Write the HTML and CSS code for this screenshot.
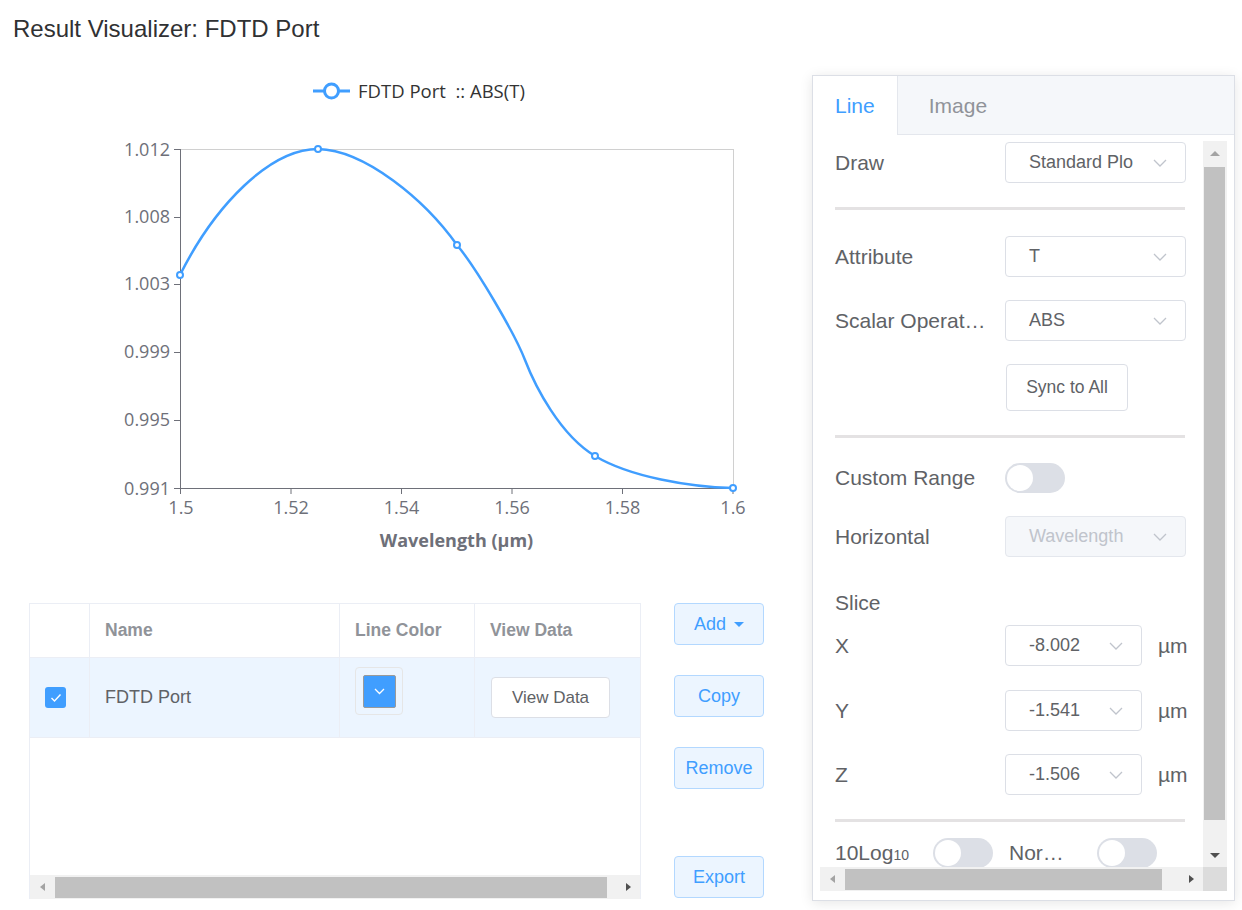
FILE: index.html
```html
<!DOCTYPE html>
<html>
<head>
<meta charset="utf-8">
<title>Result Visualizer: FDTD Port</title>
<link rel="stylesheet" href="styles.css">
</head>
<body>
<div class="page">
  <h1 class="title">Result Visualizer: FDTD Port</h1>
  <div class="main">
    <section class="left">
      <svg class="chart" width="800" height="560" viewBox="0 43 800 560">
        <line class="legend-line" x1="313" y1="91" x2="350" y2="91"/>
        <circle class="legend-marker" cx="331.5" cy="91" r="7"/>
        <text class="legend-text" x="358" y="97.5">FDTD Port  :: ABS(T)</text>

        <line class="grid-line" x1="180" y1="149.5" x2="733.5" y2="149.5"/>
        <line class="grid-line" x1="733.5" y1="149" x2="733.5" y2="488"/>

        <line class="axis" x1="180.5" y1="149" x2="180.5" y2="489"/>
        <line class="axis" x1="180" y1="488.5" x2="734" y2="488.5"/>
        <g class="axis">
          <line x1="174" y1="149.5" x2="180" y2="149.5"/>
          <line x1="174" y1="217.5" x2="180" y2="217.5"/>
          <line x1="174" y1="284.5" x2="180" y2="284.5"/>
          <line x1="174" y1="352.5" x2="180" y2="352.5"/>
          <line x1="174" y1="420.5" x2="180" y2="420.5"/>
          <line x1="174" y1="488.5" x2="180" y2="488.5"/>
          <line x1="180.5" y1="488" x2="180.5" y2="494"/>
          <line x1="291" y1="488" x2="291" y2="494"/>
          <line x1="401.5" y1="488" x2="401.5" y2="494"/>
          <line x1="512" y1="488" x2="512" y2="494"/>
          <line x1="622.5" y1="488" x2="622.5" y2="494"/>
          <line x1="733" y1="488" x2="733" y2="494"/>
        </g>
        <g class="tick-label y-labels">
          <text x="170" y="155.5">1.012</text>
          <text x="170" y="223">1.008</text>
          <text x="170" y="290">1.003</text>
          <text x="170" y="358">0.999</text>
          <text x="170" y="426">0.995</text>
          <text x="170" y="494.5">0.991</text>
        </g>
        <g class="tick-label x-labels">
          <text x="181" y="514">1.5</text>
          <text x="291" y="514">1.52</text>
          <text x="401.5" y="514">1.54</text>
          <text x="512" y="514">1.56</text>
          <text x="622.5" y="514">1.58</text>
          <text x="733" y="514">1.6</text>
        </g>
        <text class="axis-name" x="456.5" y="547">Wavelength (µm)</text>

        <path class="series" d="M180,275 C215,205 270,149 318,149 C365,150 425,200 457,245 C477,269 515,334 525,360 C535,386 560,435 595,456 C630,477 690,487 733,488"/>
        <g class="marker">
          <circle cx="180" cy="275" r="3"/>
          <circle cx="318" cy="149" r="3"/>
          <circle cx="457" cy="245" r="3"/>
          <circle cx="595" cy="456" r="3"/>
          <circle cx="733" cy="488" r="3"/>
        </g>
      </svg>

      <div class="data">
        <div class="table">
          <div class="tr thead">
            <div class="td"></div>
            <div class="td">Name</div>
            <div class="td">Line Color</div>
            <div class="td">View Data</div>
          </div>
          <div class="tr trow">
            <div class="td">
              <span class="checkbox">
                <svg width="12" height="10" viewBox="0 0 12 10"><polyline points="1.5,5 4.5,8 10.5,1.5"/></svg>
              </span>
            </div>
            <div class="td">FDTD Port</div>
            <div class="td">
              <span class="picker">
                <span class="swatch">
                  <svg width="11" height="7" viewBox="0 0 11 7"><polyline points="1,1 5.5,5.5 10,1"/></svg>
                </span>
              </span>
            </div>
            <div class="td">
              <button class="btn-plain">View Data</button>
            </div>
          </div>
          <div class="tfill"></div>
          <div class="hscroll table-h">
            <span class="sb-btn"><span class="tri tri-left"></span></span>
            <span class="hthumb table-thumb"></span>
            <span class="sb-space"></span>
            <span class="sb-btn"><span class="tri tri-right"></span></span>
          </div>
        </div>
        <div class="actions">
          <button class="btn-light">Add<span class="caret"></span></button>
          <button class="btn-light">Copy</button>
          <button class="btn-light">Remove</button>
          <button class="btn-light btn-export">Export</button>
        </div>
      </div>
    </section>

    <aside class="panel">
      <div class="tabs">
        <div class="tab active">Line</div>
        <div class="tab inactive">Image</div>
      </div>
      <div class="panel-body">
        <div class="scroller">
          <div class="viewport">
            <div class="form">
              <div class="row">
                <span class="label">Draw</span>
                <div class="select w-wide"><span class="val">Standard Plo</span><svg class="chev" viewBox="0 0 14 8"><polyline points="1,1 7,7 13,1"/></svg></div>
              </div>
              <div class="divider mt-24"></div>
              <div class="row mt-26">
                <span class="label">Attribute</span>
                <div class="select w-wide"><span class="val">T</span><svg class="chev" viewBox="0 0 14 8"><polyline points="1,1 7,7 13,1"/></svg></div>
              </div>
              <div class="row mt-23">
                <span class="label">Scalar Operat…</span>
                <div class="select w-wide"><span class="val">ABS</span><svg class="chev" viewBox="0 0 14 8"><polyline points="1,1 7,7 13,1"/></svg></div>
              </div>
              <div class="row mt-23">
                <button class="btn-sync">Sync to All</button>
              </div>
              <div class="divider mt-24"></div>
              <div class="row mt-25">
                <span class="label">Custom Range</span>
                <span class="switch"></span>
              </div>
              <div class="row mt-23">
                <span class="label">Horizontal</span>
                <div class="select w-wide disabled"><span class="val">Wavelength</span><svg class="chev" viewBox="0 0 14 8"><polyline points="1,1 7,7 13,1"/></svg></div>
              </div>
              <div class="row slice-row">
                <span class="label">Slice</span>
              </div>
              <div class="row mt-7">
                <span class="label">X</span>
                <div class="select w-narrow"><span class="val">-8.002</span><svg class="chev" viewBox="0 0 14 8"><polyline points="1,1 7,7 13,1"/></svg></div>
                <span class="unit">µm</span>
              </div>
              <div class="row mt-24">
                <span class="label">Y</span>
                <div class="select w-narrow"><span class="val">-1.541</span><svg class="chev" viewBox="0 0 14 8"><polyline points="1,1 7,7 13,1"/></svg></div>
                <span class="unit">µm</span>
              </div>
              <div class="row mt-23">
                <span class="label">Z</span>
                <div class="select w-narrow"><span class="val">-1.506</span><svg class="chev" viewBox="0 0 14 8"><polyline points="1,1 7,7 13,1"/></svg></div>
                <span class="unit">µm</span>
              </div>
              <div class="divider mt-24"></div>
              <div class="row mt-16 log-row">
                <span class="label log-label">10Log<span class="sub">10</span></span>
                <span class="switch"></span>
                <span class="label norm-label">Nor…</span>
                <span class="switch"></span>
              </div>
            </div>
          </div>
          <div class="vscroll">
            <span class="sb-vbtn"><span class="tri tri-up"></span></span>
            <span class="vthumb"></span>
            <span class="sb-space"></span>
            <span class="sb-vbtn"><span class="tri tri-down"></span></span>
          </div>
          <div class="hscroll panel-h">
            <span class="sb-btn"><span class="tri tri-left"></span></span>
            <span class="hthumb panel-thumb"></span>
            <span class="sb-space"></span>
            <span class="sb-btn"><span class="tri tri-right"></span></span>
          </div>
          <div class="corner"></div>
        </div>
      </div>
    </aside>
  </div>
</div>
</body>
</html>
```

FILE: styles.css
```css
* { box-sizing: border-box; }
html, body { margin: 0; padding: 0; background: #fff; }
body {
  font-family: "Liberation Sans", Arial, sans-serif;
  color: #606266;
  width: 1242px;
  height: 910px;
  overflow: hidden;
}
button { font-family: inherit; cursor: pointer; padding: 0; }

.title {
  margin: 0;
  padding: 15px 0 0 13px;
  height: 43px;
  font-size: 24px;
  line-height: 28px;
  font-weight: normal;
  color: #303133;
}

.main { display: flex; align-items: flex-start; }
.left { width: 800px; flex: none; }

/* chart */
.chart { display: block; }
.chart .legend-line { stroke: #409eff; stroke-width: 3; }
.chart .legend-marker { fill: #fff; stroke: #409eff; stroke-width: 3; }
.chart .legend-text {
  font-family: "Open Sans", sans-serif;
  font-size: 18.5px;
  fill: #333;
  white-space: pre;
}
.chart .grid-line { stroke: #d0d0d0; stroke-width: 1; }
.chart .axis { stroke: #6e7079; stroke-width: 1; }
.chart .tick-label {
  font-family: "Open Sans", sans-serif;
  font-size: 18px;
  fill: #6e7079;
}
.chart .y-labels { text-anchor: end; }
.chart .x-labels { text-anchor: middle; }
.chart .axis-name {
  font-family: "Open Sans", sans-serif;
  font-size: 18px;
  font-weight: bold;
  fill: #6e7079;
  text-anchor: middle;
}
.chart .series { stroke: #409eff; stroke-width: 2.5; fill: none; }
.chart .marker circle { fill: #fff; stroke: #409eff; stroke-width: 2; }

/* data table */
.data { display: flex; gap: 33px; margin-left: 29px; }
.table {
  width: 612px;
  height: 296px;
  border: 1px solid #ebeef5;
  border-bottom: none;
  display: flex;
  flex-direction: column;
  flex: none;
}
.tr { display: grid; grid-template-columns: 60px 250px 135px 1fr; flex: none; }
.td {
  display: flex;
  align-items: center;
  padding-left: 15px;
  border-right: 1px solid #ebeef5;
  border-bottom: 1px solid #ebeef5;
}
.td:last-child { border-right: none; }
.thead { height: 54px; }
.thead .td { font-weight: bold; color: #909399; font-size: 17.5px; }
.trow { height: 80px; background: #ecf5ff; }
.trow .td { font-size: 18px; color: #606266; }
.tfill { flex: 1; }

.checkbox {
  width: 21px; height: 21px;
  background: #409eff;
  border-radius: 3px;
  display: flex; align-items: center; justify-content: center;
}
.checkbox polyline { fill: none; stroke: #fff; stroke-width: 1.4; }

.picker {
  align-self: flex-start;
  margin-top: 9px;
  width: 48px; height: 48px;
  border: 1px solid #e6e6e6;
  border-radius: 4px;
  display: flex; align-items: center; justify-content: center;
}
.swatch {
  width: 33px; height: 33px;
  background: #409eff;
  border: 1px solid #9a9a9a;
  border-radius: 2px;
  display: flex; align-items: center; justify-content: center;
}
.swatch polyline { fill: none; stroke: #fff; stroke-width: 1.3; }

.btn-plain {
  margin-left: 1px;
  width: 119px; height: 41px;
  border: 1px solid #dcdfe6;
  border-radius: 4px;
  background: #fff;
  font-size: 17px;
  color: #606266;
}

.actions {
  display: flex;
  flex-direction: column;
  width: 90px;
  height: 296px;
  padding-bottom: 1px;
  flex: none;
}
.btn-light {
  height: 42px;
  width: 90px;
  border: 1px solid #b3d8ff;
  border-radius: 4px;
  background: #ecf5ff;
  color: #409eff;
  font-size: 18px;
  display: flex; align-items: center; justify-content: center;
  margin-bottom: 30px;
  flex: none;
}
.btn-export { margin-top: auto; margin-bottom: 0; }
.caret {
  width: 0; height: 0;
  margin-left: 8px;
  border-left: 5px solid transparent;
  border-right: 5px solid transparent;
  border-top: 5px solid #409eff;
}

/* scrollbars */
.hscroll {
  height: 24px;
  background: #f1f1f1;
  display: flex;
  flex: none;
}
.sb-btn { width: 24px; flex: none; display: flex; align-items: center; justify-content: center; }
.sb-space { flex: 1; }
.hthumb { background: #c1c1c1; margin: 2px 0 1px 1px; flex: none; }
.table-thumb { width: 552px; }
.panel-thumb { width: 317px; }

.vscroll { background: #f1f1f1; display: flex; flex-direction: column; }
.sb-vbtn { height: 24px; flex: none; display: flex; align-items: center; justify-content: center; }
.vthumb { background: #c1c1c1; margin: 2px 2px 0 1px; height: 653px; flex: none; }
.corner { background: #dcdcdc; }

.tri { width: 0; height: 0; display: block; }
.tri-left { border-top: 4.5px solid transparent; border-bottom: 4.5px solid transparent; border-right: 5px solid #a3a3a3; }
.tri-right { border-top: 4.5px solid transparent; border-bottom: 4.5px solid transparent; border-left: 5px solid #505050; }
.tri-up { border-left: 5px solid transparent; border-right: 5px solid transparent; border-bottom: 5px solid #a3a3a3; }
.tri-down { border-left: 5px solid transparent; border-right: 5px solid transparent; border-top: 5px solid #505050; }

/* panel */
.panel {
  width: 423px;
  height: 826px;
  margin: 32px 0 0 12px;
  border: 1px solid #dcdfe6;
  background: #fff;
  box-shadow: 0 2px 12px rgba(0, 0, 0, 0.1);
  display: flex;
  flex-direction: column;
  flex: none;
}
.tabs {
  height: 59px;
  background: #f5f7fa;
  border-bottom: 1px solid #e4e7ed;
  display: flex;
  flex: none;
}
.tab {
  height: 58px;
  display: flex;
  align-items: center;
  font-size: 21px;
  color: #909399;
}
.tab.active {
  background: #fff;
  color: #409eff;
  padding: 0 22px;
  border-right: 1px solid #e4e7ed;
  height: 59px;
  margin-bottom: -1px;
}
.tab.inactive { padding-left: 31px; height: 59px; }
.panel-body { flex: 1; padding: 6px 7px 9px 7px; min-height: 0; }
.scroller {
  display: grid;
  grid-template-columns: 1fr 24px;
  grid-template-rows: 1fr 24px;
  height: 100%;
}
.viewport { overflow: hidden; min-width: 0; min-height: 0; }
.form { width: 520px; padding: 1px 0 0 15px; }

.row { display: flex; align-items: center; }
.log-row { align-items: flex-start; height: 26px; }
.log-row .label { line-height: 30px; }
.label {
  width: 170px;
  flex: none;
  font-size: 21px;
  color: #606266;
  white-space: nowrap;
}
.log-label { width: 98px; }
.norm-label { width: 88px; margin-left: 16px; }
.sub { font-size: 14px; }

.select {
  height: 41px;
  border: 1px solid #dcdfe6;
  border-radius: 4px;
  background: #fff;
  display: flex;
  align-items: center;
  padding: 0 18px 0 23px;
  font-size: 18px;
  color: #606266;
  flex: none;
}
.select .val { flex: 1; white-space: nowrap; }
.chev {
  width: 14px; height: 8px;
  margin-left: 12px;
  flex: none;
}
.chev polyline { fill: none; stroke: #c0c4cc; stroke-width: 1.3; }
.w-wide { width: 181px; }
.w-narrow { width: 137px; }
.select.disabled { background: #f5f7fa; border-color: #e4e7ed; color: #c0c4cc; }
.unit { margin-left: 16px; font-size: 21px; color: #606266; }

.btn-sync {
  margin-left: 171px;
  width: 122px;
  height: 47px;
  border: 1px solid #dcdfe6;
  border-radius: 4px;
  background: #fff;
  font-size: 17.5px;
  color: #606266;
}

.switch {
  width: 60px;
  height: 30px;
  border-radius: 15px;
  background: #dcdfe6;
  position: relative;
  flex: none;
}
.switch::after {
  content: "";
  position: absolute;
  left: 2px; top: 2px;
  width: 26px; height: 26px;
  border-radius: 50%;
  background: #fff;
}

.divider { width: 350px; height: 3px; background: #e4e2e3; }
.slice-row { height: 30px; margin-top: 31px; }
.mt-7 { margin-top: 7px; }
.mt-16 { margin-top: 16px; }
.mt-23 { margin-top: 23px; }
.mt-24 { margin-top: 24px; }
.mt-25 { margin-top: 25px; }
.mt-26 { margin-top: 26px; }
```
